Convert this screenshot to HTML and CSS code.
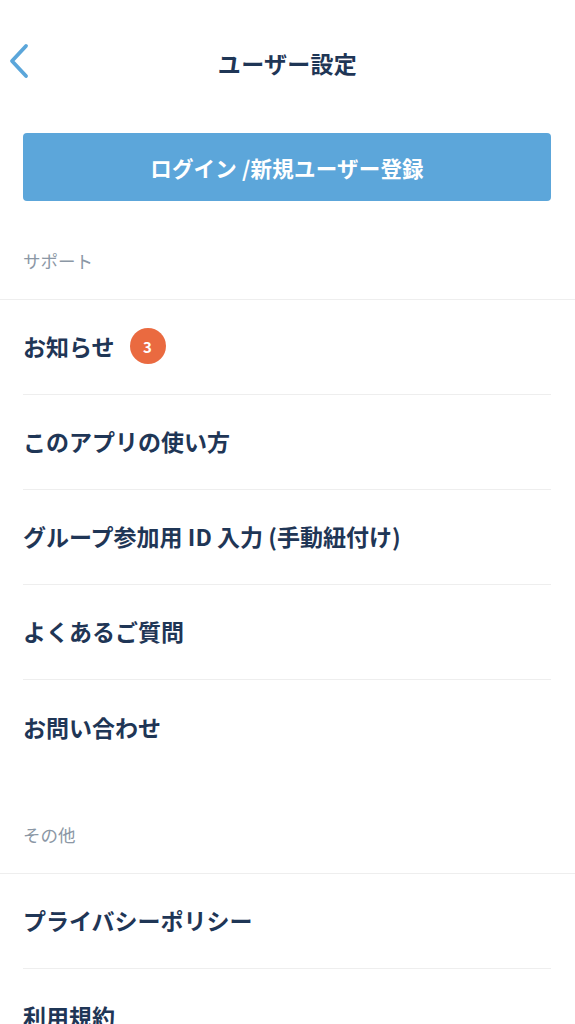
FILE: index.html
```html
<!DOCTYPE html>
<html lang="ja">
<head>
<meta charset="utf-8">
<title>ユーザー設定</title>
<link rel="stylesheet" href="styles.css">
</head>
<body>
<div class="screen">
  <header class="topbar">
    <span class="back" aria-label="戻る">
      <svg width="24" height="36" viewBox="0 0 24 36"><polyline points="17,3 3,18 17,33" fill="none" stroke="#5ba6da" stroke-width="3.8" stroke-linecap="round" stroke-linejoin="round"/></svg>
    </span>
    <h1 class="title">ユーザー設定</h1>
  </header>

  <div class="action">
    <button class="login-btn">ログイン /新規ユーザー登録</button>
  </div>

  <div class="section-label">サポート</div>
  <ul class="menu">
    <li class="row">お知らせ<span class="badge">3</span></li>
    <li class="row">このアプリの使い方</li>
    <li class="row">グループ参加用 ID 入力 (手動紐付け)</li>
    <li class="row">よくあるご質問</li>
    <li class="row">お問い合わせ</li>
  </ul>

  <div class="section-label">その他</div>
  <ul class="menu">
    <li class="row">プライバシーポリシー</li>
    <li class="row">利用規約</li>
  </ul>
</div>
</body>
</html>
```

FILE: styles.css
```css
* { box-sizing: border-box; }
html, body {
  margin: 0;
  padding: 0;
  background: #ffffff;
}
body {
  font-family: "Noto Sans CJK JP", "Noto Sans", sans-serif;
  color: #1f3656;
}
.screen {
  width: 575px;
  height: 1024px;
  overflow: hidden;
}
.topbar {
  position: relative;
  height: 126px;
  display: flex;
  align-items: center;
  justify-content: center;
}
.back {
  position: absolute;
  left: 9px;
  top: 43px;
  width: 24px;
  height: 36px;
  display: block;
}
.back svg { display: block; }
.title {
  margin: 0;
  font-size: 23px;
  font-weight: 700;
  letter-spacing: 0.3px;
  line-height: 30px;
}
.action {
  padding: 7px 24px 0 23px;
}
.login-btn {
  display: block;
  width: 100%;
  height: 68px;
  border: none;
  border-radius: 4px;
  background: #5ca6da;
  color: #ffffff;
  font-family: inherit;
  font-size: 21.5px;
  font-weight: 700;
  letter-spacing: 0.2px;
}
.section-label {
  padding: 48px 23px 26px;
  line-height: 24px;
  font-size: 17.5px;
  color: #8b97a5;
  border-bottom: 1px solid #eeeeee;
}
.menu {
  list-style: none;
  margin: 0 24px 0 23px;
  padding: 0;
}
.row {
  display: flex;
  align-items: center;
  height: 95px;
  padding-bottom: 2px;
  font-size: 23px;
  font-weight: 700;
  border-bottom: 1px solid #eeeeee;
}
.row:last-child { border-bottom: none; }
.badge {
  display: inline-flex;
  align-items: center;
  justify-content: center;
  width: 36px;
  height: 36px;
  margin-left: 15px;
  border-radius: 50%;
  background: #ea6a40;
  color: #ffffff;
  font-size: 15px;
  font-weight: 700;
}
```
